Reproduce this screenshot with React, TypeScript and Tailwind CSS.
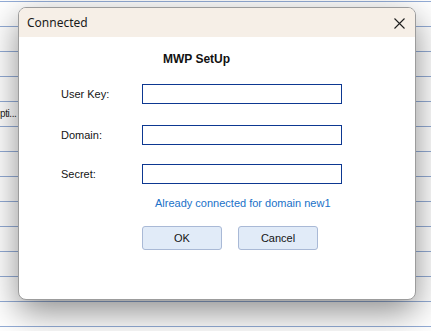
import React from "react";

const rows = Array.from({ length: 14 }, (_, i) => i);

export default function App() {
  return (
    <div
      className="relative w-[431px] h-[331px] overflow-hidden bg-white"
      style={{ fontFamily: '"Liberation Sans", Arial, sans-serif' }}
    >
      {/* background grid */}
      <div className="flex flex-col pt-px">
        {rows.map((i) => (
          <div key={i} className="h-[25px] shrink-0 border-t border-[#93acd6] flex items-center">
            {i === 4 && (
              <div className="w-[18px] whitespace-nowrap text-[10px] tracking-[-0.4px] text-[#222] pb-[2px]">
                pti...
              </div>
            )}
          </div>
        ))}
      </div>

      {/* dialog */}
      <div className="absolute left-[18px] top-[7px] w-[398px] h-[293px] rounded-[8px] border border-[#9c9c9c] bg-white overflow-hidden shadow-[0_12px_34px_rgba(0,0,0,0.45)] flex flex-col">
        <div className="h-[29px] shrink-0 bg-[#f6efe7] flex items-center justify-between pl-[8px] pr-[10px]">
          <span
            className="text-[12px] text-[#1a1a1a]"
            style={{ fontFamily: '"Segoe UI", "Noto Sans", sans-serif' }}
          >
            Connected
          </span>
          <svg width="11" height="11" viewBox="0 0 11 11" className="mt-[2px]">
            <path d="M0.5 0.5 L10.5 10.5 M10.5 0.5 L0.5 10.5" stroke="#1f1f1f" strokeWidth="1.1" fill="none" />
          </svg>
        </div>

        <div className="flex flex-col pl-[42px] text-[11px] text-[#141414]">
          <div className="ml-[102px] mt-[15px] h-[14px] leading-[14px] text-[12px] font-bold text-[#111]">MWP SetUp</div>

          <div className="mt-[18px] flex items-center h-[20px]">
            <span className="w-[81px]">User Key:</span>
            <div className="w-[200px] h-[20px] border border-[#0d3891] bg-white" />
          </div>
          <div className="mt-[21px] flex items-center h-[20px]">
            <span className="w-[81px]">Domain:</span>
            <div className="w-[200px] h-[20px] border border-[#0d3891] bg-white" />
          </div>
          <div className="mt-[19px] flex items-center h-[20px]">
            <span className="w-[81px]">Secret:</span>
            <div className="w-[200px] h-[20px] border border-[#0d3891] bg-white" />
          </div>

          <div className="ml-[94px] mt-[13px] h-[13px] leading-[13px] text-[#2071c8]">
            Already connected for domain new1
          </div>

          <div className="ml-[81px] mt-[16px] flex gap-[16px]">
            <button className="w-[80px] h-[24px] rounded-[3px] border border-[#a9b9d6] bg-[#e1ebf8] text-[11px] text-[#141414]">
              OK
            </button>
            <button className="w-[80px] h-[24px] rounded-[3px] border border-[#a9b9d6] bg-[#e1ebf8] text-[11px] text-[#141414]">
              Cancel
            </button>
          </div>
        </div>
      </div>
    </div>
  );
}
